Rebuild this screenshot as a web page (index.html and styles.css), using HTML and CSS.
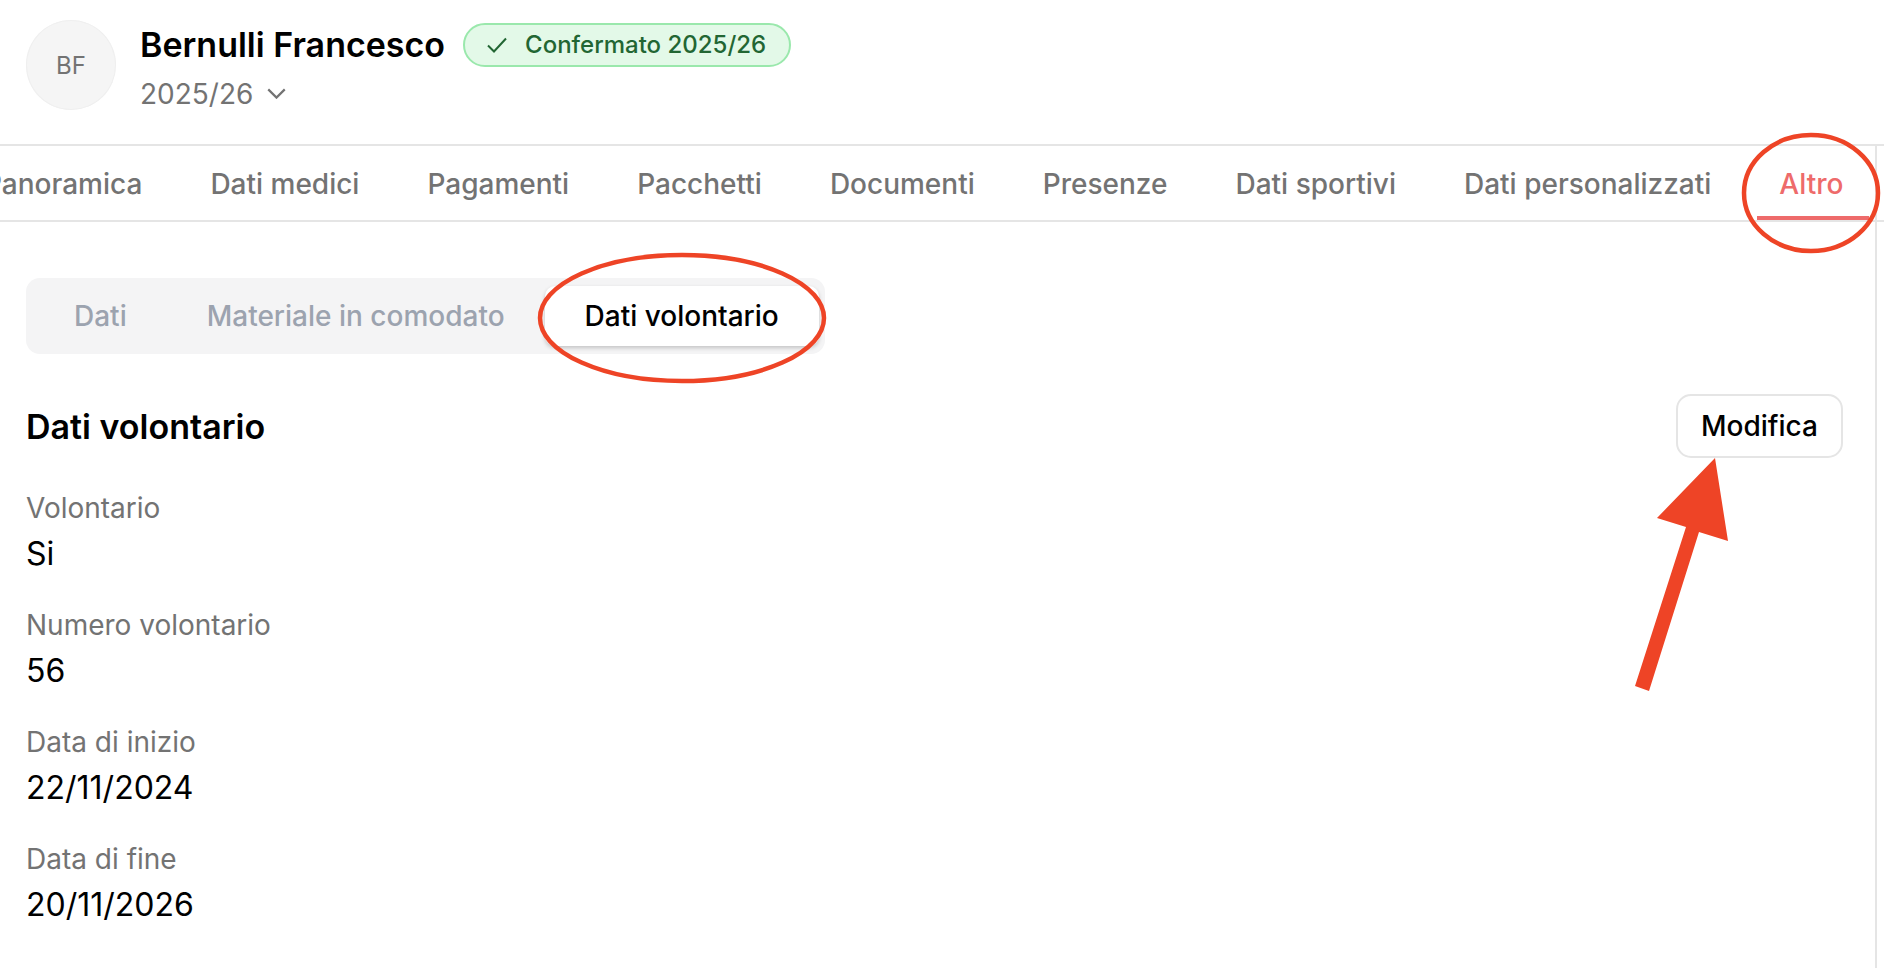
FILE: index.html
```html
<!DOCTYPE html>
<html>

<head>
    <title>Bernulli Francesco</title>
    <link rel="stylesheet" href="styles.css">
</head>

<body>
    <header class="athlete-header">
        <div class="avatar">BF</div>
        <div class="athlete-info">
            <div class="name-row">
                <h1>Bernulli Francesco</h1>
                <span class="status-badge">
                    <svg class="check-icon" viewBox="0 0 20 16" fill="none" stroke="currentColor" stroke-width="2">
                        <path d="M1 8.5 L7 14.5 L19 1.5" />
                    </svg>
                    Confermato 2025/26
                </span>
            </div>
            <div class="season-select">
                2025/26
                <svg class="chevron-icon" viewBox="0 0 20 12" fill="none" stroke="currentColor" stroke-width="2.4">
                    <path d="M1 1.5 L10 10.5 L19 1.5" />
                </svg>
            </div>
        </div>
    </header>

    <nav class="main-tabs">
        <div class="tab-list">
            <a class="main-tab">Panoramica</a>
            <a class="main-tab">Dati medici</a>
            <a class="main-tab">Pagamenti</a>
            <a class="main-tab">Pacchetti</a>
            <a class="main-tab">Documenti</a>
            <a class="main-tab">Presenze</a>
            <a class="main-tab">Dati sportivi</a>
            <a class="main-tab">Dati personalizzati</a>
            <a class="main-tab active">Altro</a>
        </div>
    </nav>

    <main class="content">
        <div class="sub-tabs">
            <a class="sub-tab">Dati</a>
            <a class="sub-tab">Materiale in comodato</a>
            <a class="sub-tab active">Dati volontario</a>
        </div>

        <div class="section-head">
            <h2>Dati volontario</h2>
            <button class="edit-button">Modifica</button>
        </div>

        <dl class="fields">
            <div class="field">
                <dt>Volontario</dt>
                <dd>Si</dd>
            </div>
            <div class="field">
                <dt>Numero volontario</dt>
                <dd>56</dd>
            </div>
            <div class="field">
                <dt>Data di inizio</dt>
                <dd>22/11/2024</dd>
            </div>
            <div class="field">
                <dt>Data di fine</dt>
                <dd>20/11/2026</dd>
            </div>
        </dl>
    </main>

    <!-- red marks drawn over the screenshot -->
    <svg class="annotations" viewBox="0 0 1884 968" fill="none" stroke="#ee4426" stroke-width="4.5">
        <ellipse cx="1811" cy="193" rx="67" ry="58" />
        <ellipse cx="682" cy="318" rx="142" ry="63" />
        <polygon points="1715,458 1657,518 1686,527 1635,686 1649,691 1699,532 1728,541" fill="#ee4426" stroke="none" />
    </svg>
</body>

</html>
```

FILE: styles.css
```css
* {
    box-sizing: border-box;
}

html,
body {
    height: 100%;
}

body {
    margin: 0;
    background-color: #fff;
    color: #000;
    font-family: Inter, "Liberation Sans", sans-serif;
    overflow: hidden;
    position: relative;
}

.athlete-header {
    display: flex;
    align-items: center;
    gap: 24px;
    height: 144px;
    padding: 0 26px 14px;
}

.avatar {
    display: flex;
    justify-content: center;
    align-items: center;
    width: 90px;
    height: 90px;
    border-radius: 50%;
    background-color: #f5f5f5;
    box-shadow: inset 0 0 0 1px #efefef;
    color: #737373;
    font-size: 24px;
}

.athlete-info {
    display: flex;
    flex-direction: column;
    gap: 12px;
}

.name-row {
    display: flex;
    align-items: center;
    gap: 18px;
    padding-top: 1px;
}

h1 {
    margin: 0;
    font-size: 34px;
    font-weight: 600;
    line-height: 44px;
}

.status-badge {
    display: flex;
    align-items: center;
    gap: 18px;
    height: 44px;
    padding: 0 23px 0 22px;
    border: 2px solid #9ae8ac;
    border-radius: 22px;
    background-color: #e3f9e8;
    color: #226633;
    font-size: 24px;
    font-weight: 500;
}

.check-icon {
    width: 20px;
    height: 16px;
}

.season-select {
    display: flex;
    align-items: center;
    gap: 14px;
    color: #737373;
    font-size: 28px;
    line-height: 30px;
}

.chevron-icon {
    width: 19px;
    height: 11px;
}

.main-tabs {
    height: 78px;
    border-top: 2px solid #e5e5e5;
    border-bottom: 2px solid #e5e5e5;
    overflow: hidden;
}

.tab-list {
    display: flex;
    gap: 18px;
    width: 1877px;
    height: 74px;
    border-right: 2px solid #e5e5e5;
    overflow: hidden;
}

.main-tab {
    display: flex;
    align-items: center;
    flex-shrink: 0;
    height: 74px;
    padding: 2px 25px 0;
    color: #737373;
    font-size: 28px;
    font-weight: 500;
    white-space: nowrap;
}

.main-tab:first-child {
    margin-left: -41px;
}

.main-tab.active {
    margin-left: 3px;
    padding: 6px 26px 0 22px;
    border-bottom: 4px solid #ee6b6b;
    color: #ee6b6b;
}

.content {
    width: 1877px;
    height: 746px;
    padding: 56px 32px 0 26px;
    border-right: 2px solid #e5e5e5;
}

.sub-tabs {
    display: flex;
    align-items: center;
    width: 799px;
    height: 76px;
    padding: 0 8px;
    border-radius: 14px;
    background-color: #f4f4f5;
}

.sub-tab {
    display: flex;
    align-items: center;
    height: 60px;
    padding: 0 40px;
    color: #9ca3af;
    font-size: 28px;
    font-weight: 500;
    white-space: nowrap;
}

.sub-tab.active {
    background-color: #fff;
    border-radius: 10px;
    box-shadow: 0 2px 4px rgba(0, 0, 0, 0.2);
    color: #000;
}

.section-head {
    display: flex;
    justify-content: space-between;
    align-items: center;
    margin-top: 40px;
}

h2 {
    margin: 0;
    font-size: 34px;
    font-weight: 600;
}

.edit-button {
    width: 167px;
    height: 64px;
    border: 2px solid #e5e5e5;
    border-radius: 15px;
    background-color: #fff;
    color: #000;
    font-family: inherit;
    font-size: 28px;
    font-weight: 500;
}

.fields {
    margin: 27px 0 0;
}

.field {
    margin-bottom: 25px;
}

dt {
    color: #737373;
    font-size: 28px;
    line-height: 46px;
}

dd {
    margin: 0;
    font-size: 32px;
    line-height: 46px;
}

.annotations {
    position: absolute;
    top: 0;
    left: 0;
    width: 1884px;
    height: 968px;
    pointer-events: none;
}
```
